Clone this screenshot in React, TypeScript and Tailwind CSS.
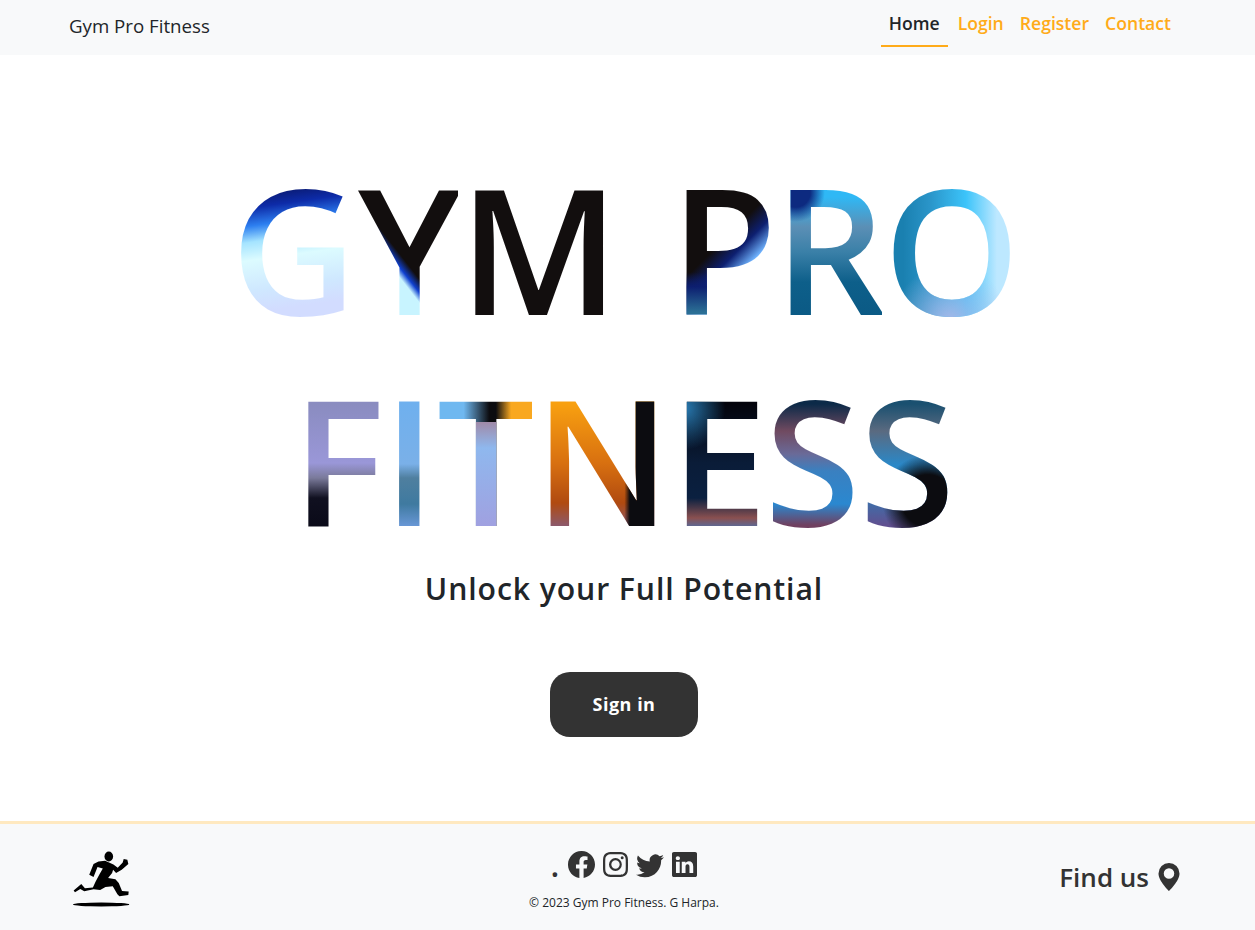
import React from 'react';
import { BsFacebook, BsInstagram, BsTwitter, BsLinkedin, BsGeoAltFill } from 'react-icons/bs';

const letter = 'inline-block bg-clip-text text-transparent';

const RunnerLogo = () => (
  <svg viewBox="95 120 175 180" className="w-[58px] h-[60px] mt-[3px]" fill="#000">
    <ellipse cx="183" cy="287" rx="85" ry="6" />
    <ellipse cx="206" cy="142" rx="13" ry="15" />
    <path d="M195 155 L220 166 L233 176 L248 160 L251 150 L262 152 L265 165 L245 182 L228 192 L219 182 L216 192 L204 207 L226 211 L236 222 L246 246 L266 248 L265 258 L238 262 L232 256 L218 232 L196 234 L180 243 L160 241 L132 247 L120 240 L104 250 L100 245 L123 225 L134 238 L158 236 L166 218 L178 196 L188 178 L172 174 L160 204 L147 197 L160 165 L175 157 Z" />
  </svg>
);

export default function App() {
  return (
    <div className="min-h-screen flex flex-col bg-white text-[#212529] font-['Open_Sans','Liberation_Sans',sans-serif]">
      <nav className="h-[55px] bg-[#f8f9fa] flex items-center justify-between pl-[69px] pr-[76px]">
        <a className="text-[18.7px] leading-[30px] mt-[-3px]">Gym Pro Fitness</a>
        <ul className="flex items-start h-full font-semibold text-[17.6px] text-[#ffab19]">
          <li className="h-[47px] px-[8px] pt-[10px] mr-[2px] border-b-2 border-[#ffab19] text-[#212529]">Home</li>
          <li className="pt-[10px] px-[8px]">Login</li>
          <li className="pt-[10px] px-[8px]">Register</li>
          <li className="pt-[10px] pl-[8px] pr-[8px]">Contact</li>
        </ul>
      </nav>

      <main className="flex-1 flex flex-col items-center pr-[7px] pt-[87px]">
        <h1 className="text-[174px] leading-[211px] font-semibold text-center whitespace-nowrap tracking-[-3px]">
          <div className="flex justify-center">
            <span className={`${letter} mr-[4px] bg-[linear-gradient(172deg,#0a1560_49px,#0d2ba8_68px,#2d7ff0_86px,#a5e4ff_102px,#dcfbff_120px,#cfe8ff_150px,#d2dcff_172px)]`}>G</span>
            <span className={`${letter} mr-[1px] bg-[linear-gradient(52deg,#c8f4ff_38%,#1040d0_41%,#120e0e_45%)]`}>Y</span>
            <span className={`${letter} bg-[linear-gradient(#120e0e,#120e0e)]`}>M</span>
            <span className="inline-block w-[54px]"> </span>
            <span className={`${letter} bg-[linear-gradient(transparent_130px,#0d1f70_145px,#2b6f95_170px),linear-gradient(135deg,#120e0e_48%,#0d1f70_56%,#70b4ff_64%)]`}>P</span>
            <span className={`${letter} mr-[1px] bg-[radial-gradient(circle_at_20%_24%,#0d2a80_8%,transparent_16%),linear-gradient(#2fb8f5_55px,#5b8fb5_85px,#3a80a8_110px,#0d5f8a_140px,#0b5a85_172px)]`}>R</span>
            <span className={`${letter} bg-[radial-gradient(circle_at_50%_85%,#a8b8e8_0%,transparent_30%),linear-gradient(90deg,#1a80b0_15%,#2a95c9_35%,#3cc4fa_62%,#bde8ff_85%)]`}>O</span>
          </div>
          <div className="flex justify-center pr-[4px]">
            <span className={`${letter} mr-[1px] bg-[linear-gradient(#8a8cc0_51px,#9a97d8_110px,#7a7a9a_125px,#101020_145px,#0a0a18_174px)]`}>F</span>
            <span className={`${letter} mr-[4px] bg-[linear-gradient(#6fb0ee_51px,#7ab0e8_111px,#4f7f9f_125px,#3f7aa0_151px,#6a98d8_174px)]`}>I</span>
            <span className={`${letter} mr-[2px] bg-[linear-gradient(transparent_69px,#a08aa8_69px,#8fb8ee_95px,#a0a0e0_174px),linear-gradient(90deg,#6fb8f0_28%,#0c0c10_55%,#0c0c10_62%,#f9a820_78%)]`}>T</span>
            <span className={`${letter} mr-[3px] bg-[linear-gradient(90deg,transparent_68%,#0c0c10_72%),linear-gradient(#f8a010_51px,#d87010_110px,#b04a10_150px,#8a5a70_174px)]`}>N</span>
            <span className={`${letter} bg-[radial-gradient(circle_at_14%_26%,#2a7fb8_0%,transparent_24%),linear-gradient(#04040c_51px,#0a1c38_110px,#0a2040_145px,#8a5050_165px,#5a6a98_174px)]`}>E</span>
            <span className={`${letter} mr-[2px] bg-[linear-gradient(#0c2a48_51px,#704a60_78px,#6a6a98_101px,#3a80c0_118px,#2a88d0_151px,#704060_172px)]`}>S</span>
            <span className={`${letter} bg-[radial-gradient(circle_at_74%_70%,#0c0c10_0%,#0c0c10_16%,transparent_28%),linear-gradient(#1a5070_51px,#5a6a80_78px,#2a88c8_112px,#2a80b8_135px,#605090_172px)]`}>S</span>
          </div>
        </h1>
        <h2 className="text-[30.2px] leading-[40px] font-[550] tracking-[0.9px] mt-[5px]">Unlock your Full Potential</h2>
        <button className="mt-[63px] w-[148px] h-[65px] rounded-[20px] bg-[#333] text-white font-bold text-[18px] tracking-[0.5px]">Sign in</button>
      </main>

      <footer className="h-[109px] bg-[#f8f9fa] border-t-[3px] border-[#ffe9c0] grid grid-cols-[1fr_auto_1fr] items-center pl-[72px] pr-[75px] text-[#333]">
        <RunnerLogo />
        <div className="flex flex-col items-center pt-[6px] mr-[4px]">
          <div className="flex items-center gap-[8px] text-[32px] font-semibold leading-[32px]">
            <span className="mr-[1px]">.</span>
            <BsFacebook size={27} />
            <BsInstagram size={25} />
            <BsTwitter size={28} />
            <BsLinkedin size={25} />
          </div>
          <p className="text-[12px] font-normal leading-[18px] mt-[13px] text-[#212529]">© 2023 Gym Pro Fitness. G Harpa.</p>
        </div>
        <div className="flex items-center justify-end gap-[6px] text-[26px] font-[550] mr-[-3px]">
          Find us <BsGeoAltFill size={28} />
        </div>
      </footer>
    </div>
  );
}
